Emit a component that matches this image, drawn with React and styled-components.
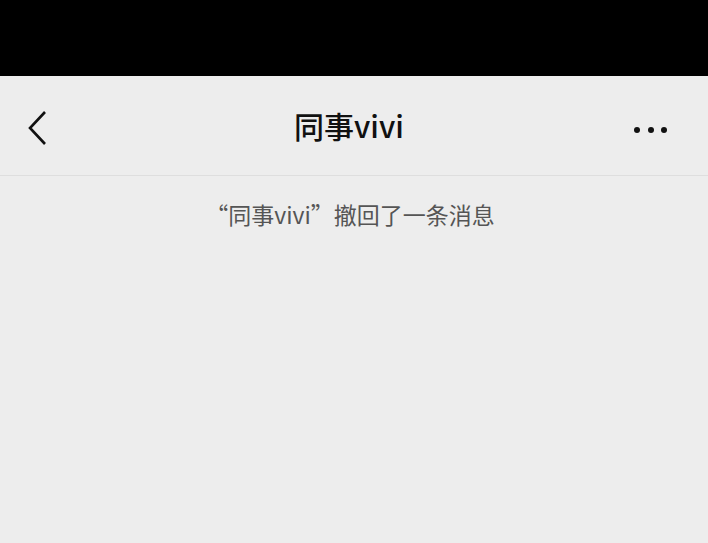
import React from "react";
import styled, { createGlobalStyle } from "styled-components";

const Global = createGlobalStyle`
  html, body { margin: 0; padding: 0; background: #ededed; }
  body { font-family: "Noto Sans CJK SC", "Noto Sans", sans-serif; }
`;

const Screen = styled.div`
  width: 708px;
  height: 543px;
  display: flex;
  flex-direction: column;
  background: #ededed;
  overflow: hidden;
`;

const StatusBar = styled.div`
  height: 76px;
  background: #000;
  flex-shrink: 0;
`;

const NavBar = styled.div`
  height: 99px;
  display: grid;
  grid-template-columns: 100px 1fr 110px;
  align-items: center;
  border-bottom: 1px solid #dedede;
  flex-shrink: 0;
`;

const IconButton = styled.div`
  display: flex;
  align-items: center;
  justify-content: ${(p) => p.$align};
  padding: ${(p) => p.$pad};
`;

const Title = styled.div`
  text-align: center;
  font-size: 30px;
  font-weight: 500;
  color: #111;
  line-height: 1;
  padding-bottom: 2px;
`;

const Body = styled.div`
  flex: 1;
  display: flex;
  flex-direction: column;
  align-items: center;
  padding-top: 23px;
`;

const Notice = styled.div`
  font-size: 23px;
  color: #555;
  line-height: 30px;
  padding-right: 8px;
`;

const Dot = styled.span`
  width: 6px;
  height: 6px;
  border-radius: 50%;
  background: #111;
`;

const Dots = styled.div`
  display: flex;
  gap: 7.5px;
`;

export default function App() {
  return (
    <Screen>
      <Global />
      <StatusBar />
      <NavBar>
        <IconButton $align="flex-start" $pad="4px 0 0 26px">
          <svg width="22" height="36" viewBox="0 0 22 36">
            <path d="M19 2 L4 18 L19 34" fill="none" stroke="#111" strokeWidth="2.6" />
          </svg>
        </IconButton>
        <Title>同事vivi</Title>
        <IconButton $align="flex-end" $pad="8px 41px 0 0">
          <Dots>
            <Dot />
            <Dot />
            <Dot />
          </Dots>
        </IconButton>
      </NavBar>
      <Body>
        <Notice>“同事vivi”撤回了一条消息</Notice>
      </Body>
    </Screen>
  );
}
